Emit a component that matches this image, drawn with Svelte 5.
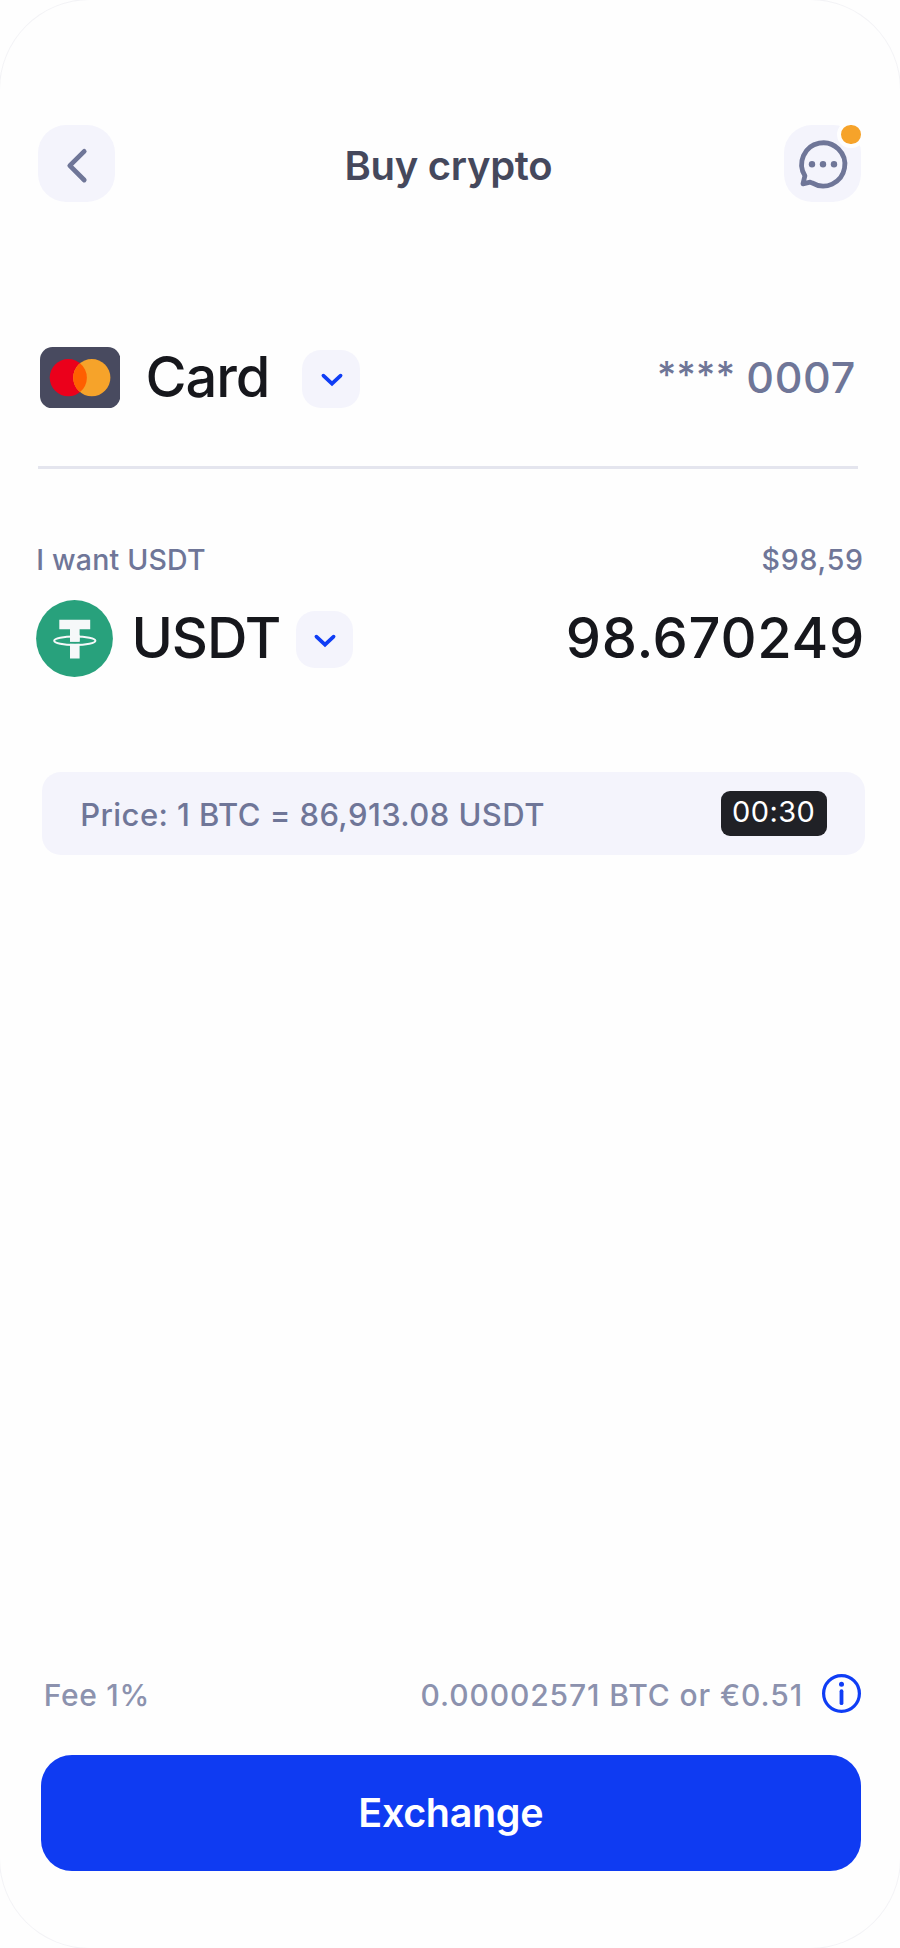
<script lang="ts">
  const method = { name: 'Card', mask: '****', digits: '0007' };
  const coin = { name: 'USDT', amount: '98.670249', fiat: '$98,59' };
  const rate = 'Price: 1 BTC = 86,913.08 USDT';
  const fee = { label: 'Fee 1%', value: '0.00002571 BTC or €0.51' };
  const timer = '00:30';
</script>

{#snippet dropdown(label: string)}
  <button class="dropdown" aria-label={label}>
    <svg width="24" height="16" viewBox="0 0 24 16" fill="none">
      <path d="M3.4 3.6L12 11.6L20.6 3.6" stroke="#0f3df5" stroke-width="3.7" stroke-linecap="round" stroke-linejoin="miter" />
    </svg>
  </button>
{/snippet}

<main class="screen">
  <header class="header">
    <button class="icon-btn" aria-label="Back">
      <svg width="77" height="77" viewBox="0 0 77 77" fill="none">
        <path d="M46.2 26.4L31.8 40.6L46.2 55" stroke="#6f7698" stroke-width="4.8" stroke-linecap="round" stroke-linejoin="round" />
      </svg>
    </button>
    <h1>Buy crypto</h1>
    <button class="icon-btn" aria-label="Support chat">
      <svg width="77" height="77" viewBox="0 0 77 77" fill="none">
        <path
          d="M20.9 50.8A21.6 21.6 0 1 1 28.1 57.9L26.2 57.2L19 58.8L20.9 50.8Z"
          stroke="#6f7698"
          stroke-width="4.8"
          stroke-linejoin="round"
        />
        <circle cx="28" cy="39.3" r="3.2" fill="#6f7698" />
        <circle cx="39" cy="39.3" r="3.2" fill="#6f7698" />
        <circle cx="50" cy="39.3" r="3.2" fill="#6f7698" />
      </svg>
      <span class="badge"></span>
    </button>
  </header>

  <section class="method">
    <svg class="card-icon" width="80.4" height="61.4" viewBox="0 0 80.4 61.4">
      <rect width="80.4" height="61.4" rx="12.5" fill="#484a5f" />
      <circle cx="28.3" cy="30.7" r="18.6" fill="#eb001b" />
      <circle cx="51.8" cy="30.7" r="18.6" fill="#f6a32a" />
      <path d="M40.05 16.3a18.6 18.6 0 0 1 0 28.8a18.6 18.6 0 0 1 0-28.8z" fill="#ff5f00" />
    </svg>
    <span class="name">{method.name}</span>
    {@render dropdown('Choose payment method')}
    <span class="number"><span class="mask">{method.mask}</span><span class="digits">{method.digits}</span></span>
  </section>

  <hr />

  <div class="captions">
    <span class="want">I want USDT</span>
    <span class="fiat">{coin.fiat}</span>
  </div>

  <section class="coin">
    <svg width="77" height="77" viewBox="0 0 77 77">
      <circle cx="38.5" cy="38.5" r="38.4" fill="#28a17c" />
      <path d="M23.3 19.8H54.2V29.2H43.6V41.6H34V29.2H23.3ZM34 43.8H43.6V58.6H34Z" fill="#f6f8f9" />
      <ellipse cx="38.8" cy="40.7" rx="20.6" ry="4.2" fill="none" stroke="#f6f8f9" stroke-width="2" />
      <path d="M34 35H43.6V41.8H34Z" fill="#f6f8f9" />
    </svg>
    <span class="name">{coin.name}</span>
    {@render dropdown('Choose coin')}
    <span class="amount">{coin.amount}</span>
  </section>

  <section class="rate">
    <span>{rate}</span>
    <time>{timer}</time>
  </section>

  <footer>
    <div class="fee">
      <span class="fee-label">{fee.label}</span>
      <span class="fee-value">{fee.value}</span>
      <svg width="39" height="39" viewBox="0 0 39 39" fill="none">
        <circle cx="19.5" cy="19.5" r="17.9" stroke="#0f3df5" stroke-width="3.2" />
        <circle cx="19.5" cy="10.2" r="2.5" fill="#0f3df5" />
        <path d="M19.5 17.2V29.2" stroke="#0f3df5" stroke-width="3.8" stroke-linecap="round" />
      </svg>
    </div>
    <button class="exchange">Exchange</button>
  </footer>
</main>

<style>
  :global(body) {
    background: #fefefe;
  }

  .screen {
    box-sizing: border-box;
    display: flex;
    flex-direction: column;
    width: 900px;
    height: 1948px;
    padding: 124.6px 0 77px;
    border-radius: 90px;
    background: #fefefe;
    box-shadow: 0 0 0 1px #f3f3f6;
    overflow: hidden;
    font-family: Inter, sans-serif;
    color: #16171c;
    white-space: nowrap;
  }

  button {
    padding: 0;
    border: none;
    font-family: inherit;
    cursor: pointer;
  }

  svg {
    display: block;
    flex: none;
  }

  .header {
    display: flex;
    align-items: center;
    justify-content: space-between;
    height: 77px;
    padding: 0 39px 0 37.8px;
  }

  .icon-btn {
    position: relative;
    width: 77px;
    height: 77px;
    border-radius: 28px;
    background: #f4f4fc;
  }

  .badge {
    position: absolute;
    top: -4px;
    right: -4px;
    width: 19.5px;
    height: 19.5px;
    border: 4px solid #fefefe;
    border-radius: 50%;
    background: #f6a32a;
  }

  h1 {
    margin: 5px 2px 0 0;
    font-size: 40px;
    font-weight: 600;
    line-height: 48px;
    letter-spacing: -0.3px;
    color: #45485c;
  }

  .method,
  .coin {
    display: flex;
    align-items: center;
  }

  .name {
    font-size: 56px;
    font-weight: 500;
    line-height: 64px;
  }

  .method {
    height: 64px;
    margin-top: 143.7px;
    padding: 0 44px 0 39.6px;
  }

  .method .name {
    margin: 0 33.2px 0 25.5px;
    letter-spacing: -1.1px;
  }

  .dropdown {
    display: flex;
    align-items: center;
    justify-content: center;
    width: 57.5px;
    height: 57.5px;
    margin-top: 3px;
    border-radius: 19px;
    background: #f4f4fc;
  }

  .dropdown svg {
    margin: 3px 0 0 1px;
  }

  .number {
    display: flex;
    align-items: flex-start;
    margin-left: auto;
    font-size: 43px;
    line-height: 52px;
    color: #6f7698;
  }

  .mask {
    margin: -2px 11px 0 0;
    font-size: 37px;
    font-weight: 500;
    letter-spacing: 0.3px;
  }

  .digits {
    font-weight: 450;
    letter-spacing: 0.7px;
  }

  hr {
    width: 820px;
    height: 3px;
    margin: 57px 0 0 38px;
    border: none;
    background: #e4e5ee;
  }

  .captions {
    display: flex;
    justify-content: space-between;
    margin-top: 73.4px;
    padding: 0 36.2px 0 36.2px;
    font-size: 28.5px;
    font-weight: 450;
    line-height: 34px;
    color: #6f7698;
  }

  .want {
    letter-spacing: 0.2px;
  }

  .fiat {
    letter-spacing: 0.8px;
  }

  .coin {
    height: 77px;
    margin-top: 23.6px;
    padding: 0 35px 0 35.8px;
  }

  .coin .name {
    margin: 0 15.7px 2px 18.6px;
    letter-spacing: -1px;
  }

  .coin .dropdown {
    margin-top: 1px;
  }

  .amount {
    margin: 0 0 2px auto;
    font-size: 56px;
    font-weight: 500;
    line-height: 64px;
    letter-spacing: 0.7px;
  }

  .rate {
    box-sizing: border-box;
    display: flex;
    align-items: center;
    justify-content: space-between;
    width: 823px;
    height: 83.4px;
    margin: 94.3px 0 0 42px;
    padding: 0 38.3px 0 38.2px;
    border-radius: 19px;
    background: #f4f4fc;
    font-size: 31px;
    font-weight: 450;
    letter-spacing: 0.43px;
    color: #6f7698;
  }

  .rate span {
    margin-top: 2px;
  }

  time {
    box-sizing: border-box;
    width: 105.7px;
    height: 45.3px;
    padding-left: 11px;
    border-radius: 9px;
    background: #202126;
    font-size: 29px;
    font-weight: 400;
    line-height: 41px;
    letter-spacing: 0.4px;
    color: #ffffff;
  }

  footer {
    margin-top: auto;
    padding: 0 39px 0 40.5px;
  }

  .fee {
    display: flex;
    align-items: center;
    height: 39px;
    margin-bottom: 42.3px;
    padding-left: 3.2px;
    font-size: 30px;
    font-weight: 450;
    line-height: 36px;
    color: #8c92ae;
  }

  .fee span {
    margin-top: 3px;
  }

  .fee-label {
    letter-spacing: 0.7px;
  }

  .fee-value {
    margin-left: auto;
    margin-right: 19px;
    letter-spacing: 0.9px;
  }

  .exchange {
    display: block;
    width: 100%;
    height: 115.7px;
    border-radius: 31px;
    background: #0f3bf2;
    font-size: 39.5px;
    font-weight: 600;
    letter-spacing: -0.35px;
    color: #ffffff;
  }
</style>
